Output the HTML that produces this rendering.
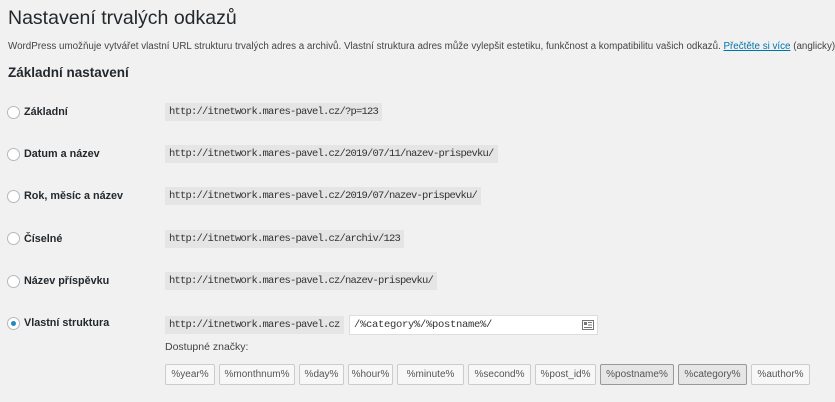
<!DOCTYPE html>
<html><head><meta charset="utf-8"><style>
body{margin:0;width:835px;height:402px;overflow:hidden;background:#f1f1f1;font-family:"Liberation Sans",sans-serif;color:#23282d;position:relative}
.a{position:absolute;white-space:nowrap}
h1{position:absolute;left:8px;top:7px;margin:0;font-size:19.5px;font-weight:400}
.desc{left:8px;top:41px;font-size:9.8px;color:#444}
.desc a{color:#0073aa;text-decoration:underline}
h2{position:absolute;left:8px;top:65px;margin:0;font-size:13.5px;font-weight:600}
.radio{position:absolute;left:7px;width:11px;height:11px;border:1px solid #b4b9be;border-radius:50%;background:#fff}
.lbl{left:24px;font-size:10.8px;font-weight:600}
code{position:absolute;left:165px;height:18px;line-height:18px;padding:0 4px;background:#e5e5e5;font-family:"Liberation Mono",monospace;font-size:10.5px;letter-spacing:-0.8px;color:#333;white-space:nowrap}
.inp{position:absolute;left:349px;top:315px;width:249px;height:20px;background:#fff;border:1px solid #ddd;box-sizing:border-box;font-family:"Liberation Mono",monospace;font-size:10.5px;letter-spacing:-0.3px;line-height:18px;padding-left:4px;color:#333}
.btn{position:absolute;top:364px;height:21px;box-sizing:border-box;border:1px solid #ccc;background:#f7f7f7;border-radius:2px;font-size:10px;color:#555;text-align:center;line-height:19px}
.on{background:#e6e6e6;border-color:#999}
</style></head><body>
<h1>Nastavení trvalých odkazů</h1>
<div class="a desc">WordPress umožňuje vytvářet vlastní URL strukturu trvalých adres a archivů. Vlastní struktura adres může vylepšit estetiku, funkčnost a kompatibilitu vašich odkazů. <a>Přečtěte si více</a> (anglicky),</div>
<h2>Základní nastavení</h2>

<div class="radio" style="top:106px"></div><div class="a lbl" style="top:106px">Základní</div><code style="top:103px">http://itnetwork.mares-pavel.cz/?p=123</code>
<div class="radio" style="top:148px"></div><div class="a lbl" style="top:148px">Datum a název</div><code style="top:145px">http://itnetwork.mares-pavel.cz/2019/07/11/nazev-prispevku/</code>
<div class="radio" style="top:190px"></div><div class="a lbl" style="top:190px">Rok, měsíc a název</div><code style="top:187px">http://itnetwork.mares-pavel.cz/2019/07/nazev-prispevku/</code>
<div class="radio" style="top:232px"></div><div class="a lbl" style="top:233px">Číselné</div><code style="top:230px">http://itnetwork.mares-pavel.cz/archiv/123</code>
<div class="radio" style="top:275px"></div><div class="a lbl" style="top:275px">Název příspěvku</div><code style="top:272px">http://itnetwork.mares-pavel.cz/nazev-prispevku/</code>
<div class="radio" style="top:317px"><div style="position:absolute;left:3px;top:3px;width:5px;height:5px;border-radius:50%;background:#1e8cbe"></div></div><div class="a lbl" style="top:317px">Vlastní struktura</div><code style="top:316px">http://itnetwork.mares-pavel.cz</code>
<div class="inp">/%category%/%postname%/</div>
<svg class="a" style="left:582px;top:320px" width="12" height="10" viewBox="0 0 12 10"><rect x="0.5" y="0.5" width="11" height="9" fill="none" stroke="#777"/><rect x="2" y="2" width="3" height="3" fill="#777"/><path d="M6 2.5h4M6 5h4M2 7.5h8" stroke="#777"/></svg>
<div class="a" style="left:165px;top:341px;font-size:10.5px;color:#444">Dostupné značky:</div>
<div class="btn" style="left:165px;width:50px">%year%</div>
<div class="btn" style="left:219px;width:76px">%monthnum%</div>
<div class="btn" style="left:299px;width:45px">%day%</div>
<div class="btn" style="left:348px;width:45px">%hour%</div>
<div class="btn" style="left:397px;width:67px">%minute%</div>
<div class="btn" style="left:468px;width:63px">%second%</div>
<div class="btn" style="left:535px;width:61px">%post_id%</div>
<div class="btn on" style="left:600px;width:74px">%postname%</div>
<div class="btn on" style="left:678px;width:69px">%category%</div>
<div class="btn" style="left:751px;width:59px">%author%</div>
</body></html>
